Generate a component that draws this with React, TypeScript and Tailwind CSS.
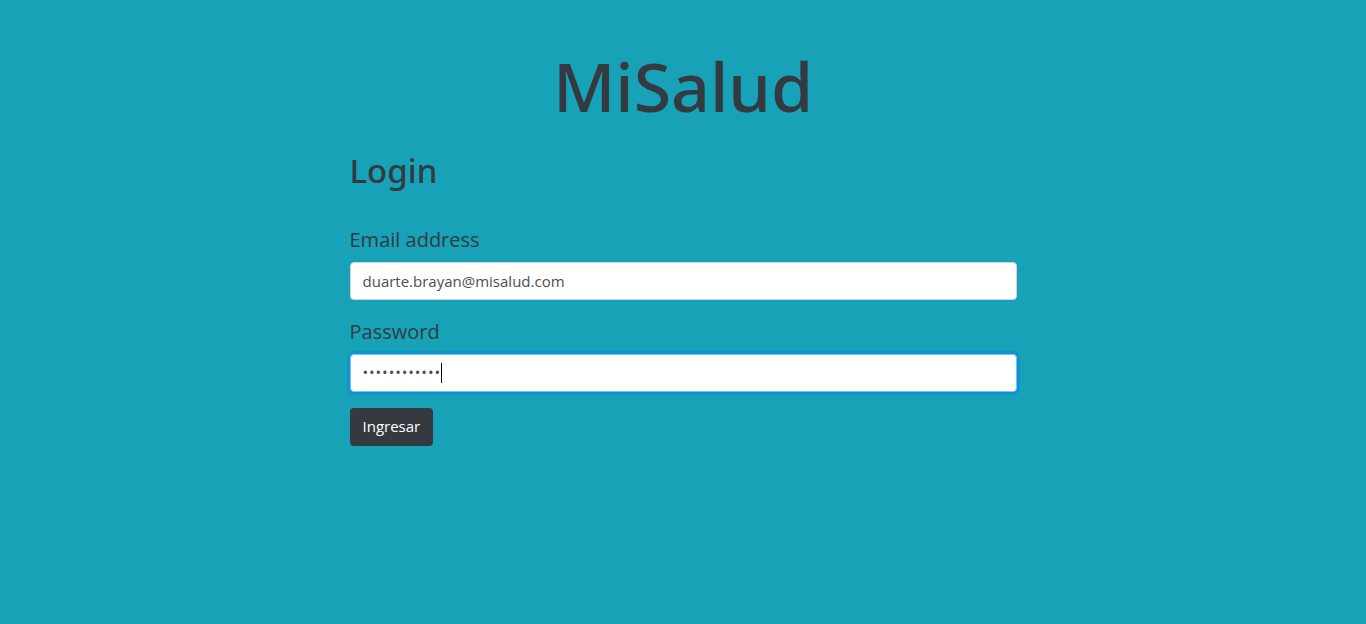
export default function App() {
  return (
    <div
      className="min-h-[624px] w-full bg-[#17a2b8] text-[#343a40]"
      style={{ fontFamily: '"Open Sans", "Noto Sans", sans-serif' }}
    >
      <div className="pt-[45px] pb-10">
        <h1
          className="text-center text-[68px] leading-[1.2] font-medium"
          style={{ fontFamily: '"Noto Sans", "Open Sans", sans-serif' }}
        >
          MiSalud
        </h1>

        <div className="mx-auto mt-[24px] w-[667px]">
          <h2
            className="text-[33px] leading-[40px] font-medium"
            style={{ fontFamily: '"Noto Sans", "Open Sans", sans-serif' }}
          >
            Login
          </h2>

          <form className="mt-[33px]" onSubmit={(e) => e.preventDefault()}>
            {/* Email */}
            <div className="mb-4">
              <label className="mb-2 block pt-[2px] text-[20px] leading-[28px]">Email address</label>
              <input
                type="email"
                defaultValue="duarte.brayan@misalud.com"
                readOnly
                className="block h-[38px] w-full rounded-[4px] border border-[#ced4da] bg-white px-3 text-[15px] text-[#495057] outline-none"
              />
            </div>

            {/* Password (focused) */}
            <div className="mb-4">
              <label className="mb-2 block pt-[2px] text-[20px] leading-[28px]">Password</label>
              <div className="flex h-[38px] w-full items-center rounded-[4px] border border-[#80bdff] bg-white px-3 shadow-[0_0_0_3px_rgba(0,123,255,0.35)]">
                <span className="text-[15px] tracking-[0.9px] text-[#495057]">••••••••••••</span>
                <span className="h-[20px] w-px bg-black" />
              </div>
            </div>

            <button
              type="submit"
              className="h-[38px] rounded-[4px] bg-[#343a40] px-[13px] text-[15px] text-white"
            >
              Ingresar
            </button>
          </form>
        </div>
      </div>
    </div>
  );
}
